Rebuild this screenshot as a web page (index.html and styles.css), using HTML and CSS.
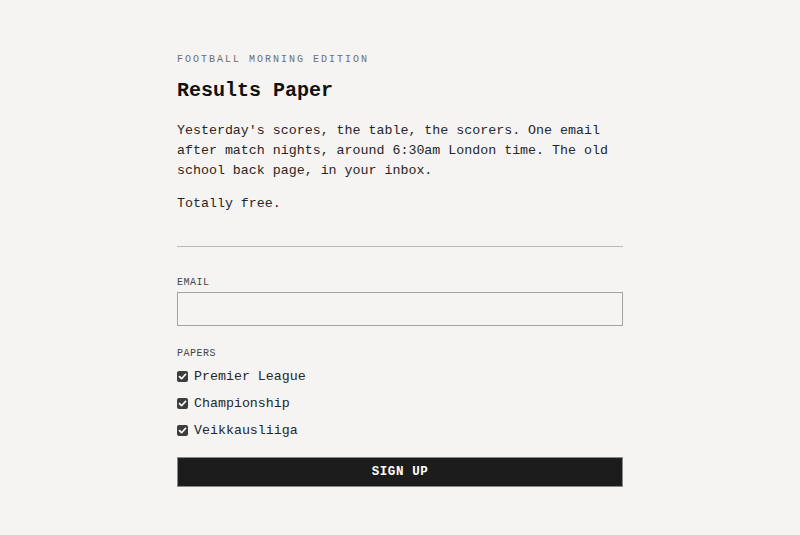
FILE: index.html
```html
<!DOCTYPE html>
<html lang="en">
<head>
<meta charset="utf-8">
<title>Results Paper</title>
<link rel="stylesheet" href="styles.css">
</head>
<body>
<main class="page">
  <p class="eyebrow">FOOTBALL MORNING EDITION</p>
  <h1 class="title">Results Paper</h1>
  <p class="lede">Yesterday's scores, the table, the scorers. One email after match nights, around 6:30am London time. The old school back page, in your inbox.</p>
  <p class="free">Totally free.</p>
  <hr class="rule">
  <form class="form">
    <label class="label" for="email">EMAIL</label>
    <input class="input" id="email" type="email">
    <div class="label papers">PAPERS</div>
    <ul class="checks">
      <li class="check"><span class="box"><svg viewBox="0 0 11 11" width="11" height="11"><path d="M2.5 5.6 L4.6 7.7 L8.6 3.3" fill="none" stroke="#fff" stroke-width="1.7" stroke-linecap="round" stroke-linejoin="round"/></svg></span>Premier League</li>
      <li class="check"><span class="box"><svg viewBox="0 0 11 11" width="11" height="11"><path d="M2.5 5.6 L4.6 7.7 L8.6 3.3" fill="none" stroke="#fff" stroke-width="1.7" stroke-linecap="round" stroke-linejoin="round"/></svg></span>Championship</li>
      <li class="check"><span class="box"><svg viewBox="0 0 11 11" width="11" height="11"><path d="M2.5 5.6 L4.6 7.7 L8.6 3.3" fill="none" stroke="#fff" stroke-width="1.7" stroke-linecap="round" stroke-linejoin="round"/></svg></span>Veikkausliiga</li>
    </ul>
    <button class="button" type="button">SIGN UP</button>
  </form>
</main>
</body>
</html>
```
FILE: styles.css
```css
* { box-sizing: border-box; }
html, body {
  margin: 0;
  padding: 0;
  background: #f5f4f2;
}
body {
  font-family: "Liberation Mono", "DejaVu Sans Mono", monospace;
  color: #1a1a1a;
}
.page {
  width: 446px;
  margin: 0 auto;
  padding-top: 53px;
}
.eyebrow {
  margin: 0;
  font-size: 10px;
  line-height: 14px;
  letter-spacing: 2px;
  color: #6e6e6e;
}
.title {
  margin: 10px 0 0;
  font-size: 20px;
  line-height: 28px;
  font-weight: 700;
  color: #111;
}
.lede {
  margin: 16px 0 0;
  font-size: 13.3px;
  line-height: 20px;
  color: #262626;
}
.free {
  margin: 13px 0 0;
  font-size: 13.3px;
  line-height: 20px;
  color: #262626;
}
.rule {
  margin: 32px 0 0;
  border: 0;
  border-top: 1px solid #b9b8b5;
  height: 0;
}
.form {
  display: flex;
  flex-direction: column;
  padding-top: 29px;
}
.label {
  display: block;
  font-size: 10px;
  line-height: 14px;
  letter-spacing: 0.5px;
  color: #444;
}
.input {
  margin-top: 2px;
  width: 100%;
  height: 34px;
  border: 1px solid #a3a3a1;
  background: #f5f4f2;
  border-radius: 0;
  padding: 0 10px;
  font-family: inherit;
  font-size: 13px;
}
.papers { margin-top: 21px; }
.checks {
  list-style: none;
  margin: 5px 0 0;
  padding: 0;
  display: flex;
  flex-direction: column;
  gap: 7px;
}
.check {
  display: flex;
  align-items: center;
  gap: 6px;
  height: 20px;
  font-size: 13.3px;
  color: #262626;
}
.box {
  width: 11px;
  height: 11px;
  background: #3d3d3d;
  border-radius: 2px;
  display: flex;
}
.button {
  margin-top: 17px;
  height: 30px;
  width: 100%;
  background: #1c1c1c;
  color: #fff;
  border: 1px solid #8a8a88;
  border-radius: 0;
  font-family: inherit;
  font-size: 12.5px;
  font-weight: 700;
  letter-spacing: 0.6px;
}
```
